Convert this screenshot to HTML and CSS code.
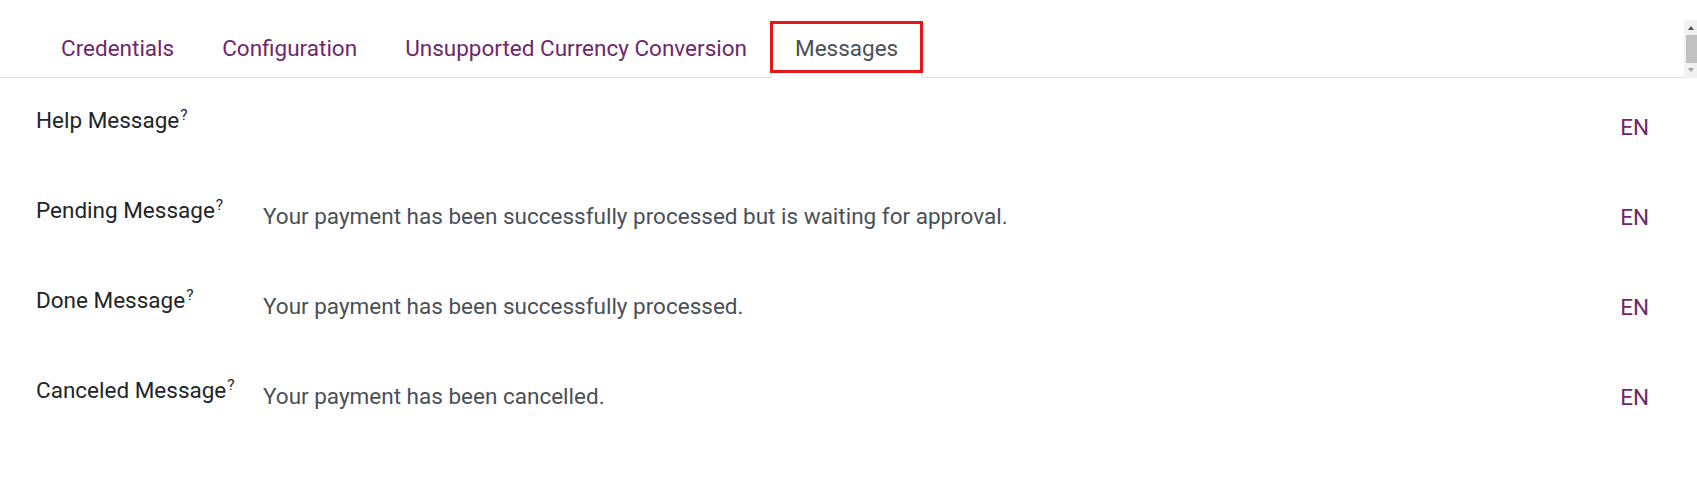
FILE: index.html
```html
<!DOCTYPE html>
<html lang="en">
<head>
<meta charset="utf-8">
<title>Payment Provider - Messages</title>
<link rel="stylesheet" href="styles.css">
</head>
<body>
  <div class="tabs-header">
    <ul class="nav-tabs">
      <li class="nav-item"><a class="nav-link">Credentials</a></li>
      <li class="nav-item"><a class="nav-link">Configuration</a></li>
      <li class="nav-item"><a class="nav-link">Unsupported Currency Conversion</a></li>
      <li class="nav-item"><a class="nav-link active">Messages</a></li>
    </ul>
    <div class="fake-scrollbar">
      <span class="sb-arrow-up"></span>
      <span class="sb-thumb"></span>
      <span class="sb-arrow-down"></span>
    </div>
  </div>

  <div class="fields">
    <div class="field-row">
      <div class="field-label">Help Message<sup class="help-mark">?</sup></div>
      <div class="field-value"></div>
      <div class="field-lang">EN</div>
    </div>
    <div class="field-row">
      <div class="field-label">Pending Message<sup class="help-mark">?</sup></div>
      <div class="field-value">Your payment has been successfully processed but is waiting for approval.</div>
      <div class="field-lang">EN</div>
    </div>
    <div class="field-row">
      <div class="field-label">Done Message<sup class="help-mark">?</sup></div>
      <div class="field-value">Your payment has been successfully processed.</div>
      <div class="field-lang">EN</div>
    </div>
    <div class="field-row">
      <div class="field-label">Canceled Message<sup class="help-mark">?</sup></div>
      <div class="field-value">Your payment has been cancelled.</div>
      <div class="field-lang">EN</div>
    </div>
  </div>
</body>
</html>
```

FILE: styles.css
```css
html, body {
  margin: 0;
  padding: 0;
  background: #ffffff;
}

body {
  font-family: Roboto, "Liberation Sans", Arial, sans-serif;
  font-size: 22.5px;
  color: #212529;
  overflow: hidden;
}

/* ---------- tabs header ---------- */
.tabs-header {
  display: flex;
  align-items: flex-start;
  margin-top: 20px;
}

.nav-tabs {
  flex: 1;
  display: flex;
  list-style: none;
  margin: 0;
  padding: 1px 0 0 37px;
  border-bottom: 1px solid #dee2e6;
}

.nav-item {
  margin-bottom: -1px;
}

.nav-link {
  position: relative;
  display: block;
  padding: 10px 23px 12px;
  line-height: 33px;
  border: 1px solid transparent;
  color: #6e276b;
  text-decoration: none;
  cursor: pointer;
}

.nav-link.active {
  color: #495057;
  background: #ffffff;
  border-color: #dee2e6 #dee2e6 #ffffff;
}

/* red highlight annotation around the active tab */
.nav-link.active::after {
  content: "";
  position: absolute;
  left: -2px;
  right: -2px;
  top: -1px;
  bottom: 4px;
  border: 3px solid #e3171c;
  pointer-events: none;
}

/* ---------- scrollbar of the header ---------- */
.fake-scrollbar {
  width: 13px;
  height: 58px;
  flex-shrink: 0;
  background: #f1f1f1;
  display: flex;
  flex-direction: column;
  box-sizing: border-box;
  padding-top: 6px;
}

.sb-arrow-up,
.sb-arrow-down {
  width: 0;
  height: 0;
  align-self: center;
  border-left: 3.5px solid transparent;
  border-right: 3.5px solid transparent;
}

.sb-arrow-up {
  border-bottom: 4px solid #505050;
}

.sb-arrow-down {
  margin-top: 5px;
  border-top: 4px solid #a3a3a3;
}

.sb-thumb {
  margin: 5px 0 0 2px;
  height: 28px;
  background: #c1c1c1;
}

/* ---------- fields ---------- */
.fields {
  padding-top: 24px;
}

.field-row {
  display: flex;
  align-items: flex-start;
  height: 90px;
  padding: 0 48px 0 36px;
}

.field-label {
  width: 227px;
  flex-shrink: 0;
  padding-top: 1.5px;
  line-height: 33px;
  color: #212529;
}

.help-mark {
  font-size: 15.5px;
  line-height: 0;
  vertical-align: 7.5px;
  margin-left: 1px;
  color: #212529;
}

.field-value {
  flex: 1;
  padding-top: 7.5px;
  line-height: 33px;
  color: #4a4f57;
}

.field-lang {
  padding-top: 8.5px;
  line-height: 33px;
  color: #6e276b;
}
```
